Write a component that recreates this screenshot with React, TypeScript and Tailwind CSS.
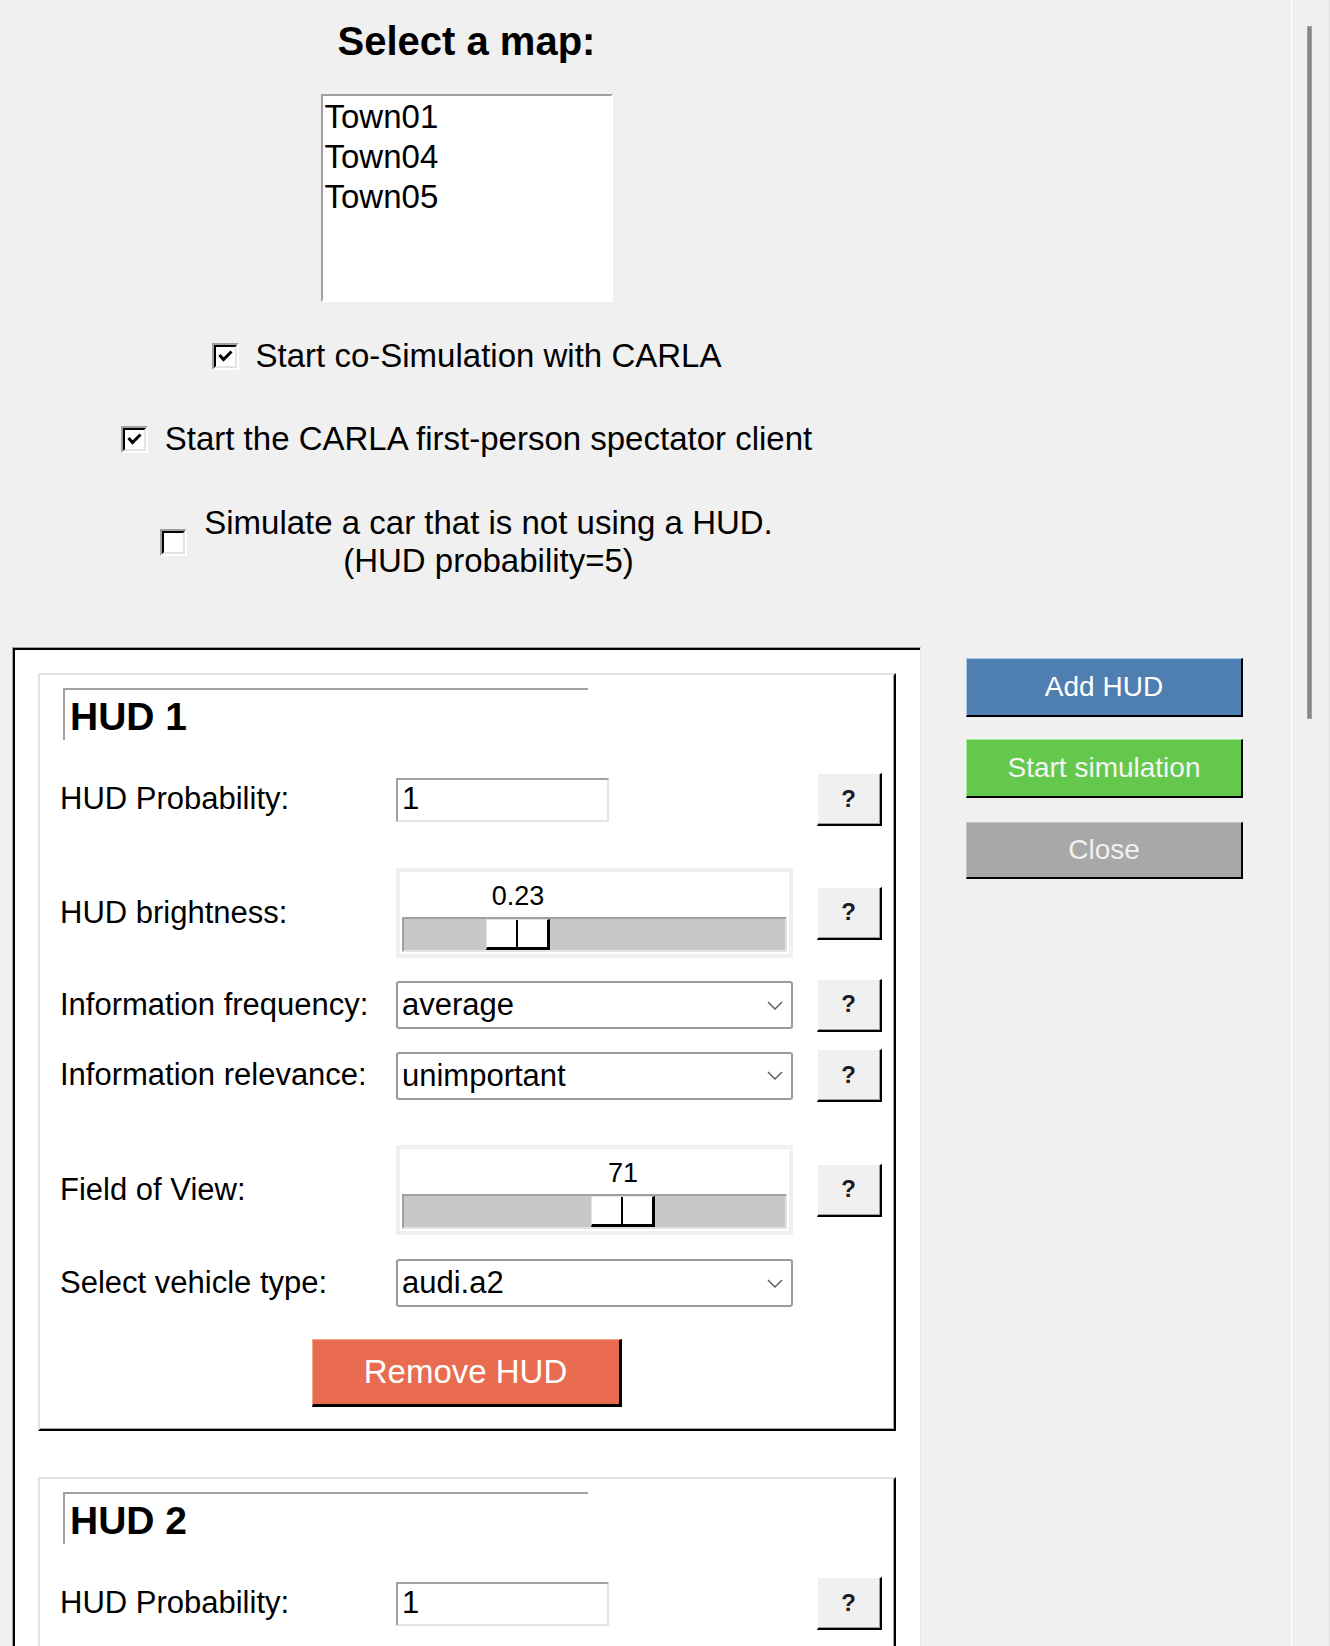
import React from "react";

function Check({ checked }: { checked: boolean }) {
  return (
    <div className="w-[27px] h-[27px] shrink-0 border-2 border-t-[#a0a0a0] border-l-[#a0a0a0] border-r-white border-b-white">
      <div className="w-full h-full border-2 border-t-black border-l-black border-r-[#e3e3e3] border-b-[#e3e3e3] bg-white flex items-center justify-center">
        {checked && (
          <svg width="15" height="12" viewBox="0 0 15 12">
            <polyline points="1.5,5 5.5,9.5 13.5,1.5" fill="none" stroke="#000" strokeWidth="3" />
          </svg>
        )}
      </div>
    </div>
  );
}

function Help() {
  return (
    <div className="ml-[24px] w-[65px] h-[53px] shrink-0 border-t border-l border-t-white border-l-white border-r-2 border-b-2 border-r-black border-b-black">
      <div className="w-full h-full bg-[#f0f0f0] border-r border-b border-[#a0a0a0] flex items-center justify-center text-[24px] font-bold text-[#1a1a2a]">
        ?
      </div>
    </div>
  );
}

function Slider({ value, pos }: { value: string; pos: number }) {
  return (
    <div className="w-[397px] h-[90px] border-4 border-[#f0f0f0] bg-white flex flex-col">
      <div
        className="mt-[9px] h-[30px] w-[64px] flex justify-center text-[27px] leading-[30px] whitespace-nowrap text-black"
        style={{ marginLeft: pos + 4 }}
      >
        {value}
      </div>
      <div className="mt-[6px] mx-[2px] h-[35px] border-2 border-t-[#a0a0a0] border-l-[#a0a0a0] border-r-[#e3e3e3] border-b-[#e3e3e3] bg-[#c8c8c8] flex">
        <div
          className="h-full w-[64px] bg-white border-t border-l border-[#e3e3e3] border-r-[3px] border-b-[3px] border-r-black border-b-black flex"
          style={{ marginLeft: pos }}
        >
          <div className="flex-1" />
          <div className="w-[2px] bg-black" />
          <div className="flex-1" />
        </div>
      </div>
    </div>
  );
}

function Combo({ value }: { value: string }) {
  return (
    <div className="w-[397px] h-[48px] border-2 border-[#9a9a9a] rounded-[3px] bg-white flex items-center pl-[4px] pr-[8px]">
      <span className="flex-1 text-[31px] leading-[44px] text-black">{value}</span>
      <svg width="16" height="9" viewBox="0 0 16 9">
        <polyline points="1,1 8,8 15,1" fill="none" stroke="#555" strokeWidth="1.4" />
      </svg>
    </div>
  );
}

function Entry({ value }: { value: string }) {
  return (
    <div className="w-[213px] h-[44px] border-2 border-t-[#a0a0a0] border-l-[#a0a0a0] border-r-[#e3e3e3] border-b-[#e3e3e3] bg-white flex items-center pl-[4px] text-[31px] text-black">
      {value}
    </div>
  );
}

function Row({
  label,
  className,
  help = true,
  children,
}: {
  label: string;
  className: string;
  help?: boolean;
  children: React.ReactNode;
}) {
  return (
    <div className={"flex items-center pl-[20px] " + className}>
      <div className="w-[336px] shrink-0 text-[31px] text-black whitespace-nowrap">{label}</div>
      <div className="w-[397px] shrink-0 flex items-center">{children}</div>
      {help && <Help />}
    </div>
  );
}

function HudCard({ n, className, partial = false }: { n: number; className: string; partial?: boolean }) {
  return (
    <div className={"w-[858px] border-2 border-t-[#e3e3e3] border-l-[#e3e3e3] border-r-black border-b-black " + className}>
      <div className="bg-white border-r border-b border-[#a0a0a0] flex flex-col pb-[21px]">
        <div className="ml-[23px] mt-[13px] w-[525px] h-[52px] border-t-2 border-l-2 border-[#a0a0a0] pl-[5px]">
          <span className="block text-[39px] font-bold leading-[53px] text-black">HUD {n}</span>
        </div>
        <Row label="HUD Probability:" className="mt-[33px] h-[53px]">
          <Entry value="1" />
        </Row>
        {partial ? (
          <div className="h-[500px]" />
        ) : (
          <>
            <Row label="HUD brightness:" className="mt-[42px] h-[90px]">
              <Slider value="0.23" pos={82} />
            </Row>
            <Row label="Information frequency:" className="mt-[20px] h-[54px]">
              <Combo value="average" />
            </Row>
            <Row label="Information relevance:" className="mt-[16px] h-[55px]">
              <Combo value="unimportant" />
            </Row>
            <Row label="Field of View:" className="mt-[42px] h-[90px]">
              <Slider value="71" pos={187} />
            </Row>
            <Row label="Select vehicle type:" className="mt-[24px] h-[48px]" help={false}>
              <Combo value="audi.a2" />
            </Row>
            <div className="mt-[32px] self-center w-[310px] h-[68px] bg-[#e96c50] border-t border-l border-t-[#f3a48f] border-l-[#f3a48f] border-r-[3px] border-b-[3px] border-r-black border-b-black flex items-center justify-center text-white text-[33px]">
              Remove HUD
            </div>
          </>
        )}
      </div>
    </div>
  );
}

export default function App() {
  return (
    <div className="w-[1330px] h-[1646px] bg-[#f0f0f0] flex overflow-hidden font-['Liberation_Sans',Arial,sans-serif] text-black">
      <div className="w-[1291px] shrink-0 flex flex-col">
        <div className="ml-[12px] w-[909px] flex flex-col items-center">
          <div className="mt-[21px] h-[40px] leading-[40px] text-[40px] font-bold">Select a map:</div>
          <div className="mt-[33px] w-[292px] h-[208px] border-2 border-t-[#a0a0a0] border-l-[#a0a0a0] border-r-white border-b-white bg-white pl-[2px] pt-[1px] text-[33px] leading-[40px]">
            <div>Town01</div>
            <div>Town04</div>
            <div>Town05</div>
          </div>
          <div className="mt-[35px] h-[38px] flex items-center gap-[17px]">
            <Check checked />
            <span className="text-[33px] leading-[38px] whitespace-nowrap">Start co-Simulation with CARLA</span>
          </div>
          <div className="mt-[45px] h-[38px] flex items-center gap-[17px]">
            <Check checked />
            <span className="text-[33px] leading-[38px] whitespace-nowrap">
              Start the CARLA first-person spectator client
            </span>
          </div>
          <div className="mt-[46px] h-[76px] flex items-center gap-[17px]">
            <Check checked={false} />
            <div className="text-[33px] leading-[38px] text-center whitespace-nowrap">
              <div>Simulate a car that is not using a HUD.</div>
              <div>(HUD probability=5)</div>
            </div>
          </div>
        </div>
        <div className="mt-[67px] ml-[12px] flex items-start gap-[45px]">
          <div className="w-[909px] shrink-0 border-t border-l border-t-[#a0a0a0] border-l-[#a0a0a0] border-r border-r-[#e3e3e3] bg-white">
            <div className="border-t-2 border-l-2 border-black pt-[23px] pl-[23px] flex flex-col">
              <HudCard n={1} className="" />
              <HudCard n={2} className="mt-[46px]" partial />
            </div>
          </div>
          <div className="mt-[11px] w-[277px] shrink-0 flex flex-col">
            <div className="h-[59px] bg-[#4f7eb0] border-t border-l border-t-[#a9c6ec] border-l-[#a9c6ec] border-r-2 border-b-2 border-r-black border-b-black flex items-center justify-center text-white text-[28px]">
              Add HUD
            </div>
            <div className="mt-[22px] h-[59px] bg-[#64c84c] border-t border-l border-t-[#a6ee95] border-l-[#a6ee95] border-r-2 border-b-2 border-r-black border-b-black flex items-center justify-center text-[#f4f4f4] text-[28px]">
              Start simulation
            </div>
            <div className="mt-[24px] h-[57px] bg-[#a8a8a8] border-t border-l border-t-[#c4c4c4] border-l-[#c4c4c4] border-r-2 border-b-2 border-r-black border-b-black flex items-center justify-center text-[#f0f0f0] text-[28px]">
              Close
            </div>
          </div>
        </div>
      </div>
      <div className="w-px shrink-0 bg-white" />
      <div className="flex-1 border-r border-[#e3e3e3]">
        <div className="ml-[15px] mt-[26px] w-[5px] h-[693px] bg-[#868686] border border-[#a0a0a0]" />
      </div>
    </div>
  );
}
